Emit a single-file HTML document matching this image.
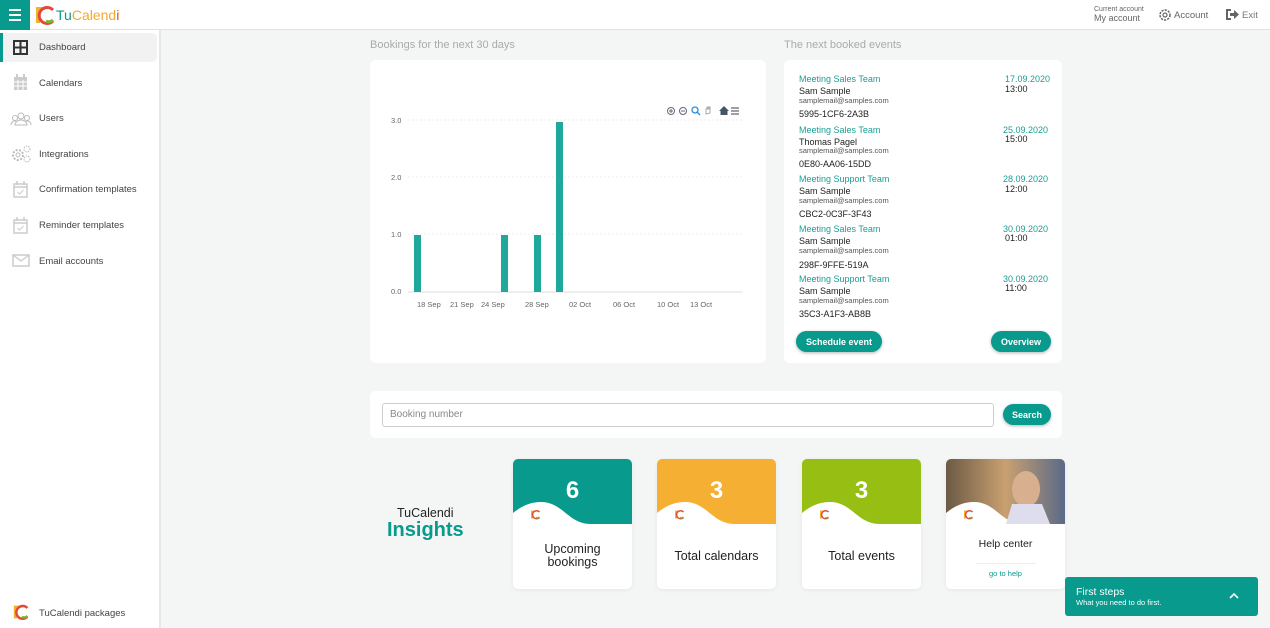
<!DOCTYPE html>
<html><head><meta charset="utf-8"><style>
*{box-sizing:border-box;margin:0;padding:0}
body{width:1270px;height:628px;overflow:hidden;background:#f4f5f5;font-family:"Liberation Sans",sans-serif;color:#333;position:relative}
.abs{position:absolute}
.hdr{left:0;top:0;width:1270px;height:30px;background:#fff;border-bottom:1px solid #e2e2e2}
.side{left:0;top:30px;width:161px;height:598px;background:#fff;border-right:2px solid #e6e6e6}
.nav{position:absolute;left:0;width:157px;height:30px;font-size:9.5px;color:#444;display:flex;align-items:center;padding-left:39px}
.card{background:#fff;border-radius:6px;position:absolute}
.t{position:absolute;white-space:nowrap}
.ev .a{color:#1a9e93;font-size:9px}
.ev .b{font-size:9px;color:#222}
.ev .c{font-size:7.5px;color:#555}
.btn{position:absolute;background:#079a8d;color:#fff;font-size:9px;font-weight:bold;border-radius:11px;height:21px;display:flex;align-items:center;justify-content:center;box-shadow:0 1px 3px rgba(0,0,0,.3)}
.ins{position:absolute;top:459px;width:119px;height:130px;background:#fff;border-radius:5px;overflow:hidden;box-shadow:0 1px 4px rgba(0,0,0,.06)}
.ins .top{position:absolute;left:0;top:0;width:119px;height:65px}
.ins .num{position:absolute;left:0;top:18px;width:119px;text-align:center;color:#fff;font-size:24px;font-weight:bold}
.ins .lbl{position:absolute;left:0;width:119px;text-align:center;font-size:12.5px;color:#222;line-height:13px}
.ins .lg{position:absolute;left:17px;top:50px}
</style></head><body>
<div class="abs hdr"></div>
<div class="abs" style="left:0;top:0;width:30px;height:30px;background:#079a8d"></div>
<div class="abs" style="left:9px;top:9px;width:12px;height:2px;background:#fff;box-shadow:0 5px 0 #fff,0 10px 0 #fff"></div>
<svg class="abs" style="left:34px;top:5px" width="22" height="20" viewBox="0 0 22 20"><path d="M2 2h9v3H6v13H2z" fill="#f4b030"/><path d="M19 5a8 8 0 1 0 0 11" stroke="#e14a3a" stroke-width="3" fill="none"/><path d="M12 16a6 6 0 0 0 7-1" stroke="#79b82a" stroke-width="3" fill="none"/></svg>
<div class="t" style="left:56px;top:7px;font-size:14px;color:#079a8d">Tu<span style="color:#f4a830">Calend</span><span style="color:#e14a3a">i</span></div>
<div class="t" style="left:1094px;top:6px;font-size:7px;color:#666">Current account</div>
<div class="t" style="left:1094px;top:13px;font-size:9px;color:#666">My account</div>
<svg class="abs" style="left:1158px;top:8px" width="14" height="14" viewBox="0 0 14 14"><circle cx="7" cy="7" r="5" fill="none" stroke="#666" stroke-width="1.5" stroke-dasharray="2.2 1.1"/><circle cx="7" cy="7" r="2" fill="none" stroke="#666" stroke-width="1.2"/></svg>
<div class="t" style="left:1174px;top:10px;font-size:9.5px;color:#666">Account</div>
<svg class="abs" style="left:1225px;top:8px" width="14" height="13" viewBox="0 0 14 13"><path d="M1 1h5v2H3v7h3v2H1z" fill="#666"/><path d="M5 5h4V2l5 4.5L9 11V8H5z" fill="#666"/></svg>
<div class="t" style="left:1242px;top:10px;font-size:9.5px;color:#777">Exit</div>

<div class="abs side"></div>
<div class="abs" style="left:0;top:33px;width:157px;height:29px;background:#f2f2f2;border-radius:0 5px 5px 0;border-left:3px solid #079a8d"></div>
<svg class="abs" style="left:13px;top:40px" width="15" height="15"><rect x="1" y="1" width="13" height="13" fill="none" stroke="#333" stroke-width="2"/><path d="M7.5 1v13M1 7.5h13" stroke="#333" stroke-width="2"/></svg>
<div class="nav" style="top:32px">Dashboard</div>
<svg class="abs" style="left:13px;top:74px" width="15" height="17"><rect x="1" y="3" width="13" height="13" fill="#ccc"/><rect x="3" y="0" width="2" height="4" fill="#ccc"/><rect x="10" y="0" width="2" height="4" fill="#ccc"/><path d="M1 8h13M1 12h13M5 6v10M10 6v10" stroke="#fff"/></svg>
<div class="nav" style="top:68px">Calendars</div>
<svg class="abs" style="left:10px;top:112px" width="22" height="14"><circle cx="11" cy="4" r="3" fill="none" stroke="#bbb"/><circle cx="5" cy="6" r="2.5" fill="none" stroke="#bbb"/><circle cx="17" cy="6" r="2.5" fill="none" stroke="#bbb"/><path d="M5 13a6 5 0 0 1 12 0zM1 13a4 4 0 0 1 5-4M21 13a4 4 0 0 0-5-4" fill="none" stroke="#bbb"/></svg>
<div class="nav" style="top:103px">Users</div>
<svg class="abs" style="left:10px;top:145px" width="22" height="18"><circle cx="8" cy="10" r="5" fill="none" stroke="#bbb" stroke-width="2" stroke-dasharray="2 1.5"/><circle cx="8" cy="10" r="2" fill="none" stroke="#bbb"/><circle cx="17" cy="4" r="3" fill="none" stroke="#bbb" stroke-dasharray="1.5 1"/><circle cx="17" cy="14" r="3" fill="none" stroke="#bbb" stroke-dasharray="1.5 1"/></svg>
<div class="nav" style="top:139px">Integrations</div>
<svg class="abs" style="left:13px;top:181px" width="15" height="17"><rect x="1" y="3" width="13" height="13" fill="none" stroke="#ccc" stroke-width="1.5"/><path d="M4 0v4M11 0v4M1 6h13" stroke="#ccc" stroke-width="1.5"/><path d="M4.5 11l2 2 4-4" stroke="#ccc" fill="none"/></svg>
<div class="nav" style="top:174px">Confirmation templates</div>
<svg class="abs" style="left:13px;top:217px" width="15" height="17"><rect x="1" y="3" width="13" height="13" fill="none" stroke="#ccc" stroke-width="1.5"/><path d="M4 0v4M11 0v4M1 6h13" stroke="#ccc" stroke-width="1.5"/><path d="M4.5 11l2 2 4-4" stroke="#ccc" fill="none"/></svg>
<div class="nav" style="top:210px">Reminder templates</div>
<svg class="abs" style="left:12px;top:254px" width="18" height="13"><rect x="1" y="1" width="16" height="11" fill="none" stroke="#ccc" stroke-width="1.5"/><path d="M1 1l8 6 8-6" stroke="#ccc" fill="none" stroke-width="1.3"/></svg>
<div class="nav" style="top:246px">Email accounts</div>
<svg class="abs" style="left:12px;top:604px" width="18" height="16" viewBox="0 0 22 20"><path d="M2 2h9v3H6v13H2z" fill="#f4b030"/><path d="M19 5a8 8 0 1 0 0 11" stroke="#e14a3a" stroke-width="3" fill="none"/><path d="M12 16a6 6 0 0 0 7-1" stroke="#79b82a" stroke-width="3" fill="none"/></svg>
<div class="nav" style="top:598px">TuCalendi packages</div>

<div class="t" style="left:370px;top:39px;font-size:11px;color:#aaa">Bookings for the next 30 days</div>
<div class="t" style="left:784px;top:39px;font-size:11px;color:#aaa">The next booked events</div>

<div class="card" style="left:370px;top:60px;width:396px;height:303px"></div>
<svg class="abs" style="left:370px;top:60px" width="396" height="303">
<g font-family="Liberation Sans" font-size="7.5" fill="#666">
<text x="21" y="63">3.0</text><text x="21" y="120">2.0</text><text x="21" y="177">1.0</text><text x="21" y="234">0.0</text>
<text x="47" y="247">18 Sep</text><text x="80" y="247">21 Sep</text><text x="111" y="247">24 Sep</text><text x="155" y="247">28 Sep</text><text x="199" y="247">02 Oct</text><text x="243" y="247">06 Oct</text><text x="287" y="247">10 Oct</text><text x="320" y="247">13 Oct</text>
</g>
<g stroke="#eee" stroke-dasharray="2 2"><path d="M38 60H372M38 117H372M38 174H372"/></g>
<path d="M38 232H372" stroke="#ddd"/>
<g fill="#1fa99c"><rect x="44" y="175" width="7" height="57"/><rect x="131" y="175" width="7" height="57"/><rect x="164" y="175" width="7" height="57"/><rect x="186" y="62" width="7" height="170"/></g>
<g fill="none" stroke="#667"><circle cx="301" cy="51" r="3.5"/><path d="M299 51h4M301 49v4"/><circle cx="313" cy="51" r="3.5"/><path d="M311 51h4"/></g>
<circle cx="325" cy="50" r="3" fill="none" stroke="#2a8be0" stroke-width="1.3"/><path d="M327 52l3 3" stroke="#2a8be0" stroke-width="1.3"/>
<path d="M336 54v-5h1v-2h1v2h1v-2h1v6z" fill="none" stroke="#aaa"/>
<path d="M349 51l5-5 5 5h-1.5v4h-7v-4z" fill="#456"/>
<path d="M361 48h8M361 51h8M361 54h8" stroke="#667" stroke-width="1.2"/>
</svg>

<div class="card" style="left:784px;top:60px;width:278px;height:303px"></div>
<div class="ev">
<div class="t a" style="left:799px;top:74px">Meeting Sales Team</div><div class="t a" style="left:1005px;top:74px">17.09.2020</div><div class="t b" style="left:1005px;top:84px">13:00</div>
<div class="t b" style="left:799px;top:86px">Sam Sample</div><div class="t c" style="left:799px;top:96px">samplemail@samples.com</div><div class="t b" style="left:799px;top:109px">5995-1CF6-2A3B</div>
<div class="t a" style="left:799px;top:125px">Meeting Sales Team</div><div class="t a" style="left:1003px;top:125px">25.09.2020</div><div class="t b" style="left:1005px;top:134px">15:00</div>
<div class="t b" style="left:799px;top:137px">Thomas Pagel</div><div class="t c" style="left:799px;top:146px">samplemail@samples.com</div><div class="t b" style="left:799px;top:159px">0E80-AA06-15DD</div>
<div class="t a" style="left:799px;top:174px">Meeting Support Team</div><div class="t a" style="left:1003px;top:174px">28.09.2020</div><div class="t b" style="left:1005px;top:184px">12:00</div>
<div class="t b" style="left:799px;top:186px">Sam Sample</div><div class="t c" style="left:799px;top:196px">samplemail@samples.com</div><div class="t b" style="left:799px;top:209px">CBC2-0C3F-3F43</div>
<div class="t a" style="left:799px;top:224px">Meeting Sales Team</div><div class="t a" style="left:1003px;top:224px">30.09.2020</div><div class="t b" style="left:1005px;top:233px">01:00</div>
<div class="t b" style="left:799px;top:236px">Sam Sample</div><div class="t c" style="left:799px;top:246px">samplemail@samples.com</div><div class="t b" style="left:799px;top:260px">298F-9FFE-519A</div>
<div class="t a" style="left:799px;top:274px">Meeting Support Team</div><div class="t a" style="left:1003px;top:274px">30.09.2020</div><div class="t b" style="left:1005px;top:283px">11:00</div>
<div class="t b" style="left:799px;top:286px">Sam Sample</div><div class="t c" style="left:799px;top:296px">samplemail@samples.com</div><div class="t b" style="left:799px;top:309px">35C3-A1F3-AB8B</div>
</div>
<div class="btn" style="left:796px;top:331px;width:86px">Schedule event</div>
<div class="btn" style="left:991px;top:331px;width:60px">Overview</div>

<div class="card" style="left:370px;top:391px;width:692px;height:47px"></div>
<div class="abs" style="left:382px;top:403px;width:612px;height:24px;border:1px solid #ccc;border-radius:3px;background:#fff"></div>
<div class="t" style="left:390px;top:409px;font-size:10px;color:#888">Booking number</div>
<div class="btn" style="left:1003px;top:404px;width:48px">Search</div>

<div class="t" style="left:397px;top:506px;font-size:12.5px;color:#222">TuCalendi</div>
<div class="t" style="left:387px;top:519px;font-size:20px;font-weight:bold;color:#079a8d">Insights</div>

<div class="ins" style="left:513px"><svg class="top" viewBox="0 0 119 65"><path d="M0 0h119v65H78C55 65 50 43 28 43 14 43 5 50 0 54z" fill="#079a8d"/></svg><svg class="lg" width="11" height="11" viewBox="0 0 22 20"><path d="M2 2h9v3H6v13H2z" fill="#f4b030"/><path d="M19 5a8 8 0 1 0 0 11" stroke="#e14a3a" stroke-width="3" fill="none"/><path d="M12 16a6 6 0 0 0 7-1" stroke="#79b82a" stroke-width="3" fill="none"/></svg><div class="num">6</div><div class="lbl" style="top:84px">Upcoming<br>bookings</div></div>
<div class="ins" style="left:657px"><svg class="top" viewBox="0 0 119 65"><path d="M0 0h119v65H78C55 65 50 43 28 43 14 43 5 50 0 54z" fill="#f5b033"/></svg><svg class="lg" width="11" height="11" viewBox="0 0 22 20"><path d="M2 2h9v3H6v13H2z" fill="#f4b030"/><path d="M19 5a8 8 0 1 0 0 11" stroke="#e14a3a" stroke-width="3" fill="none"/><path d="M12 16a6 6 0 0 0 7-1" stroke="#79b82a" stroke-width="3" fill="none"/></svg><div class="num">3</div><div class="lbl" style="top:91px">Total calendars</div></div>
<div class="ins" style="left:802px"><svg class="top" viewBox="0 0 119 65"><path d="M0 0h119v65H78C55 65 50 43 28 43 14 43 5 50 0 54z" fill="#97be12"/></svg><svg class="lg" width="11" height="11" viewBox="0 0 22 20"><path d="M2 2h9v3H6v13H2z" fill="#f4b030"/><path d="M19 5a8 8 0 1 0 0 11" stroke="#e14a3a" stroke-width="3" fill="none"/><path d="M12 16a6 6 0 0 0 7-1" stroke="#79b82a" stroke-width="3" fill="none"/></svg><div class="num">3</div><div class="lbl" style="top:91px">Total events</div></div>
<div class="ins" style="left:946px"><svg class="top" viewBox="0 0 119 65"><defs><linearGradient id="g" x1="0" x2="1"><stop offset="0" stop-color="#6b5a45"/><stop offset=".5" stop-color="#c9a070"/><stop offset="1" stop-color="#5a6a88"/></linearGradient></defs><path d="M0 0h119v65H78C55 65 50 43 28 43 14 43 5 50 0 54z" fill="url(#g)"/><ellipse cx="80" cy="30" rx="14" ry="18" fill="#d8b090"/><path d="M60 65l6-20h30l8 20z" fill="#dde"/></svg><svg class="lg" width="11" height="11" viewBox="0 0 22 20"><path d="M2 2h9v3H6v13H2z" fill="#f4b030"/><path d="M19 5a8 8 0 1 0 0 11" stroke="#e14a3a" stroke-width="3" fill="none"/><path d="M12 16a6 6 0 0 0 7-1" stroke="#79b82a" stroke-width="3" fill="none"/></svg><div class="lbl" style="top:79px;font-size:10.5px">Help center</div><div class="abs" style="left:30px;top:104px;width:60px;height:1px;background:#eee"></div><div class="lbl" style="top:108px;font-size:7.5px;color:#079a8d">go to help</div></div>

<div class="abs" style="left:1065px;top:577px;width:193px;height:39px;background:#079a8d;border-radius:3px"></div>
<div class="t" style="left:1076px;top:586px;font-size:10.5px;color:#fff">First steps</div>
<div class="t" style="left:1076px;top:598px;font-size:7.5px;color:#fff">What you need to do first.</div>
<svg class="abs" style="left:1229px;top:592px" width="10" height="8"><path d="M1 6l4-4 4 4" stroke="#fff" stroke-width="1.6" fill="none"/></svg>
</body></html>
